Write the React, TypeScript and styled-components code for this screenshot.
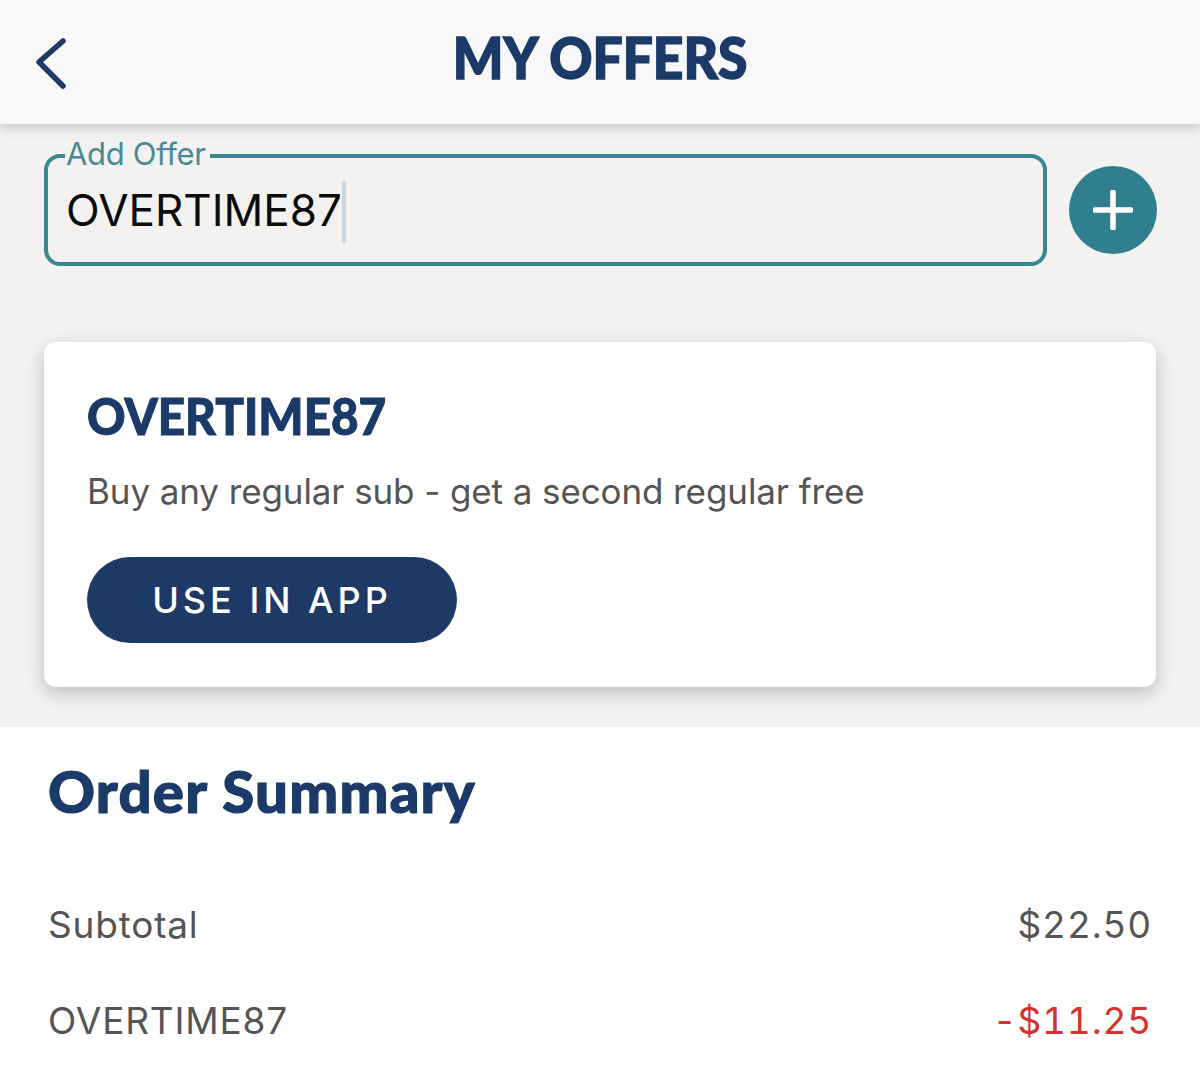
import styled, { createGlobalStyle } from "styled-components";

const GlobalStyle = createGlobalStyle`
    html, body {
        margin: 0;
        padding: 0;
        background: #ffffff;
        font-family: "Inter", "Liberation Sans", sans-serif;
    }
    * {
        box-sizing: border-box;
    }
`;

const Page = styled.div`
    width: 1200px;
    height: 1069px;
    overflow: hidden;
    display: flex;
    flex-direction: column;
`;
const Header = styled.header`
    height: 124px;
    flex-shrink: 0;
    display: flex;
    align-items: center;
    justify-content: center;
    position: relative;
    z-index: 1;
    background-color: #f8f8f8;
    box-shadow: 0 3px 12px rgba(0, 0, 0, 0.2);
`;
const BackButton = styled.button`
    position: absolute;
    left: 32px;
    top: 35px;
    width: 38px;
    height: 56px;
    padding: 0;
    border: none;
    background: none;
`;
const Title = styled.h1`
    margin: 0;
    font-family: "Lato", sans-serif;
    font-size: 58px;
    font-weight: 900;
    line-height: 1;
    color: #1b3a68;
    -webkit-text-stroke: 1.5px #1b3a68;
    transform: translateY(-5px) scaleX(0.92);
`;
const OfferArea = styled.section`
    height: 603px;
    flex-shrink: 0;
    padding: 30px 44px 0;
    background-color: #f3f2f1;
`;
const InputRow = styled.div`
    display: flex;
    align-items: center;
    gap: 22px;
    height: 112px;
`;
const InputBox = styled.div`
    width: 1003px;
    height: 112px;
    flex-shrink: 0;
    padding: 23px 18px 0;
    position: relative;
    border: 4px solid #3a8793;
    border-radius: 16px;
`;
const FloatingLabel = styled.label`
    position: absolute;
    left: 17px;
    top: -21px;
    padding: 0 4px 0 1px;
    font-size: 31px;
    line-height: 34px;
    letter-spacing: -0.3px;
    color: #4a8a96;
    background-color: #f3f2f1;
`;
const InputValue = styled.div`
    display: inline-block;
    height: 62px;
    font-size: 44px;
    line-height: 58px;
    color: #0c0c0c;
    border-right: 4px solid #c9d8e0;
`;
const AddButton = styled.button`
    width: 88px;
    height: 88px;
    flex-shrink: 0;
    display: flex;
    align-items: center;
    justify-content: center;
    padding: 0;
    border: none;
    border-radius: 50%;
    background-color: #2f7f8f;
`;
const OfferCard = styled.article`
    width: 1112px;
    height: 345px;
    margin-top: 76px;
    padding: 44px 43px 0;
    background-color: #ffffff;
    border-radius: 12px;
    box-shadow: 0 6px 18px rgba(0, 0, 0, 0.22);
`;
const OfferCode = styled.h2`
    margin: 0;
    font-family: "Lato", sans-serif;
    font-size: 52px;
    font-weight: 900;
    line-height: 58px;
    color: #1b3a68;
    -webkit-text-stroke: 1px #1b3a68;
    transform: scaleX(0.915);
    transform-origin: left center;
`;
const OfferText = styled.p`
    margin: 26px 0 0;
    font-size: 35px;
    line-height: 42px;
    letter-spacing: -0.1px;
    color: #555555;
`;
const UseButton = styled.button`
    width: 370px;
    height: 86px;
    margin-top: 45px;
    display: block;
    padding: 0;
    border: none;
    border-radius: 43px;
    font-family: "Inter", sans-serif;
    font-size: 36px;
    font-weight: 500;
    letter-spacing: 4px;
    color: #ffffff;
    background-color: #1d3a66;
`;
const Summary = styled.section`
    flex: 1;
    padding: 30px 48px 0 48px;
    background-color: #ffffff;
`;
const SummaryTitle = styled.h2`
    margin: 0 0 76px;
    font-family: "Lato", sans-serif;
    font-size: 58px;
    font-weight: 900;
    line-height: 68px;
    letter-spacing: 1.3px;
    color: #1b3a68;
    -webkit-text-stroke: 1.2px #1b3a68;
`;
const Row = styled.div`
    display: flex;
    justify-content: space-between;
    align-items: center;
    height: 46px;
    margin-bottom: 50px;
    font-size: 37px;
    letter-spacing: 0.8px;
    color: #555555;
`;
const Amount = styled.span<{ $discount?: boolean }>`
    font-variant-numeric: tabular-nums;
    letter-spacing: 0.8px;
    color: ${props => props.$discount ? "#d0342c" : "#555555"};
`;

function App()
{
    return (
        <Page>
            <GlobalStyle />
            <Header>
                <BackButton aria-label="Back">
                    <svg width="38" height="56" viewBox="0 0 38 56" fill="none">
                        <path d="M31 6 L7 27 L31 51" stroke="#1b3a68" strokeWidth="5.5" strokeLinecap="round" strokeLinejoin="round" />
                    </svg>
                </BackButton>
                <Title>MY OFFERS</Title>
            </Header>
            <OfferArea>
                <InputRow>
                    <InputBox>
                        <FloatingLabel>Add Offer</FloatingLabel>
                        <InputValue>OVERTIME87</InputValue>
                    </InputBox>
                    <AddButton aria-label="Add">
                        <svg width="40" height="40" viewBox="0 0 40 40" fill="none">
                            <path d="M20 2 V38 M2 20 H38" stroke="#ffffff" strokeWidth="5.5" strokeLinecap="round" />
                        </svg>
                    </AddButton>
                </InputRow>
                <OfferCard>
                    <OfferCode>OVERTIME87</OfferCode>
                    <OfferText>Buy any regular sub - get a second regular free</OfferText>
                    <UseButton>USE IN APP</UseButton>
                </OfferCard>
            </OfferArea>
            <Summary>
                <SummaryTitle>Order Summary</SummaryTitle>
                <Row>
                    <span>Subtotal</span>
                    <Amount>$22.50</Amount>
                </Row>
                <Row>
                    <span>OVERTIME87</span>
                    <Amount $discount>-$11.25</Amount>
                </Row>
            </Summary>
        </Page>
    );
}

export default App;
